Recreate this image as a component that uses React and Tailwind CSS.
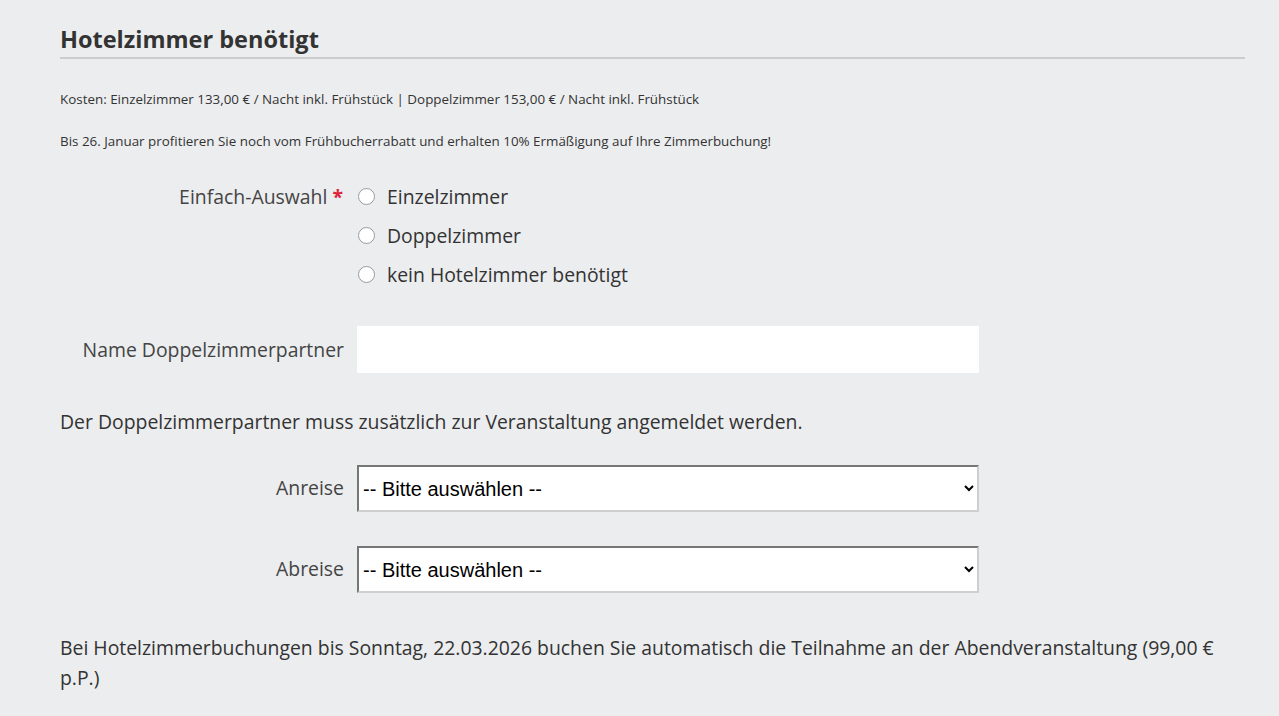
const font = { fontFamily: '"Open Sans", "Noto Sans", sans-serif' }

function Radio({ label }) {
  return (
    <label className="flex items-center h-[39px] gap-[12px] cursor-pointer">
      <span className="w-[17px] h-[17px] rounded-full border border-[#9a9a9a] bg-white shrink-0" />
      <span className="text-[19.4px] text-[#333]">{label}</span>
    </label>
  )
}

function Select() {
  return (
    <select
      className="w-[622px] h-[47px] bg-white border-2 border-t-[#767676] border-l-[#767676] border-r-[#cfcfcf] border-b-[#cfcfcf] pl-0 pr-2 text-[20px] text-black outline-none"
      style={{ fontFamily: '"Liberation Sans", Arial, sans-serif' }}
      defaultValue=""
    >
      <option value="">-- Bitte auswählen --</option>
    </select>
  )
}

export default function App() {
  return (
    <div className="min-h-[716px] bg-[#ecedef] text-[#333]" style={font}>
      <div className="pl-[60px] pr-[34px] pt-[23px]">
        <h2 className="text-[23.5px] font-bold leading-[32px] text-[#333] pb-[2px] border-b-2 border-[#cccccc]">
          Hotelzimmer benötigt
        </h2>

        <p className="text-[13.4px] leading-[20px] mt-[30px]">
          Kosten: Einzelzimmer 133,00 € / Nacht inkl. Frühstück | Doppelzimmer 153,00 € / Nacht inkl. Frühstück
        </p>
        <p className="text-[13.4px] leading-[20px] mt-[22px]">
          Bis 26. Januar profitieren Sie noch vom Frühbucherrabatt und erhalten 10% Ermäßigung auf Ihre Zimmerbuchung!
        </p>

        <div className="flex mt-[26px]">
          <div className="w-[284px] text-right text-[19.4px] leading-[39px] text-[#444] pr-[1px]">
            Einfach-Auswahl <span className="text-[#e0223a] font-bold">*</span>
          </div>
          <div className="ml-[14px] flex flex-col">
            <Radio label="Einzelzimmer" />
            <Radio label="Doppelzimmer" />
            <Radio label="kein Hotelzimmer benötigt" />
          </div>
        </div>

        <div className="flex items-center mt-[32px]">
          <div className="w-[284px] text-right text-[19.4px] text-[#444]">Name Doppelzimmerpartner</div>
          <input type="text" className="ml-[13px] w-[622px] h-[47px] bg-white outline-none px-2 text-[19px]" />
        </div>

        <p className="text-[19.4px] leading-[28px] mt-[35px]">
          Der Doppelzimmerpartner muss zusätzlich zur Veranstaltung angemeldet werden.
        </p>

        <div className="flex items-center mt-[29px]">
          <div className="w-[284px] text-right text-[19.4px] text-[#444] pb-[2px]">Anreise</div>
          <div className="ml-[13px]"><Select /></div>
        </div>

        <div className="flex items-center mt-[34px]">
          <div className="w-[284px] text-right text-[19.4px] text-[#444] pb-[2px]">Abreise</div>
          <div className="ml-[13px]"><Select /></div>
        </div>

        <p className="text-[19.4px] leading-[30px] mt-[40px]">
          Bei Hotelzimmerbuchungen bis Sonntag, 22.03.2026 buchen Sie automatisch die Teilnahme an der Abendveranstaltung (99,00 € p.P.)
        </p>
      </div>
    </div>
  )
}
